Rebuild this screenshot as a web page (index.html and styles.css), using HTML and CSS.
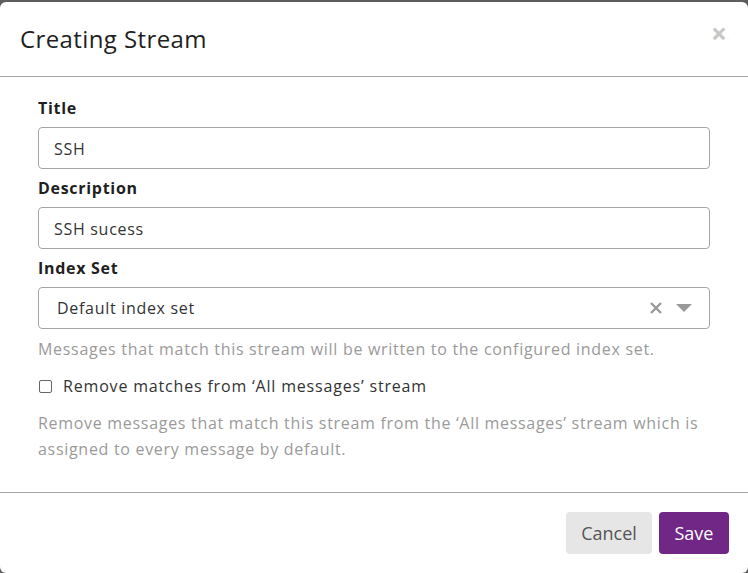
FILE: index.html
```html
<!DOCTYPE html>
<html>
<head>
<meta charset="utf-8">
<link rel="stylesheet" href="styles.css">
</head>
<body>
<div class="modal">
  <div class="modal-header">
    <h2 class="modal-title">Creating Stream</h2>
    <span class="close">×</span>
  </div>
  <div class="modal-body">
    <label class="label">Title</label>
    <div class="input">SSH</div>
    <label class="label">Description</label>
    <div class="input">SSH sucess</div>
    <label class="label">Index Set</label>
    <div class="input select">
      <span class="select-value">Default index set</span>
      <span class="select-icons">
        <svg width="14" height="14" viewBox="0 0 14 14"><path d="M2 2 L12 12 M12 2 L2 12" stroke="#999" stroke-width="2.4" fill="none"/></svg>
        <svg width="18" height="10" viewBox="0 0 18 10"><path d="M1 1 L17 1 L9 9 Z" fill="#999"/></svg>
      </span>
    </div>
    <p class="help first">Messages that match this stream will be written to the configured index set.</p>
    <label class="check"><span class="box"></span>Remove matches from ‘All messages’ stream</label>
    <p class="help">Remove messages that match this stream from the ‘All messages’ stream which is assigned to every message by default.</p>
  </div>
  <div class="modal-footer">
    <button class="btn btn-cancel">Cancel</button>
    <button class="btn btn-save">Save</button>
  </div>
</div>
</body>
</html>
```
FILE: styles.css
```css
html, body {
  margin: 0;
  padding: 0;
  height: 573px;
  overflow: hidden;
}
body {
  background: #5e5e5e;
  font-family: "Open Sans", "Noto Sans", sans-serif;
  color: #1f1f1f;
}
.modal {
  margin-top: 2px;
  height: 571px;
  background: #fff;
  border-radius: 6px;
  display: flex;
  flex-direction: column;
}
.modal-header {
  border-bottom: 1px solid #a6a6a6;
  display: flex;
  align-items: center;
  justify-content: space-between;
  padding: 0 20px;
  box-sizing: border-box;
  height: 75px;
}
.modal-title {
  margin: 0;
  font-size: 24px;
  font-weight: 400;
  line-height: 30px;
  letter-spacing: 0.4px;
  color: #1f1f1f;
}
.close {
  font-size: 28px;
  font-weight: 700;
  line-height: 30px;
  color: #c8c8c8;
  margin-top: -13px;
  margin-right: 1px;
}
.modal-body {
  padding: 20px 38px 0;
  flex: 1;
  display: flex;
  flex-direction: column;
  letter-spacing: 0.7px;
}
.label {
  font-size: 16px;
  font-weight: 700;
  line-height: 22px;
  margin-bottom: 8px;
}
.input {
  height: 42px;
  box-sizing: border-box;
  border: 1px solid #a6a6a6;
  border-radius: 4px;
  padding: 0 15px;
  font-size: 16px;
  line-height: 42px;
  color: #333;
  margin-bottom: 8px;
}
.select {
  display: flex;
  justify-content: space-between;
  align-items: center;
  padding-left: 18px;
  padding-right: 16px;
  margin-bottom: 0;
}
.select-value {
  line-height: 42px;
}
.select-icons {
  display: flex;
  align-items: center;
  gap: 12px;
}
.help {
  margin: 9px 0 0;
  font-size: 16px;
  line-height: 26px;
  color: #9a9a9a;
}
.help.first {
  margin-top: 7px;
}
.check {
  display: flex;
  align-items: center;
  font-size: 16px;
  line-height: 26px;
  letter-spacing: 0.82px;
  color: #333;
  margin-top: 11px;
  margin-bottom: 2px;
}
.box {
  width: 11px;
  height: 11px;
  border: 1px solid #666;
  border-radius: 2px;
  margin-left: 1px;
  margin-right: 11px;
}
.modal-footer {
  border-top: 1px solid #a6a6a6;
  height: 81px;
  box-sizing: border-box;
  display: flex;
  justify-content: flex-end;
  align-items: flex-start;
  padding: 19px 19px 0;
  gap: 7px;
}
.btn {
  height: 42px;
  border: none;
  border-radius: 4px;
  font-family: "Open Sans", "Noto Sans", sans-serif;
  font-size: 18px;
  padding: 0 15px;
  cursor: pointer;
}
.btn-cancel {
  background: #e6e6e6;
  color: #555;
  width: 86px;
}
.btn-save {
  background: #702785;
  color: #fff;
  width: 70px;
}
```
